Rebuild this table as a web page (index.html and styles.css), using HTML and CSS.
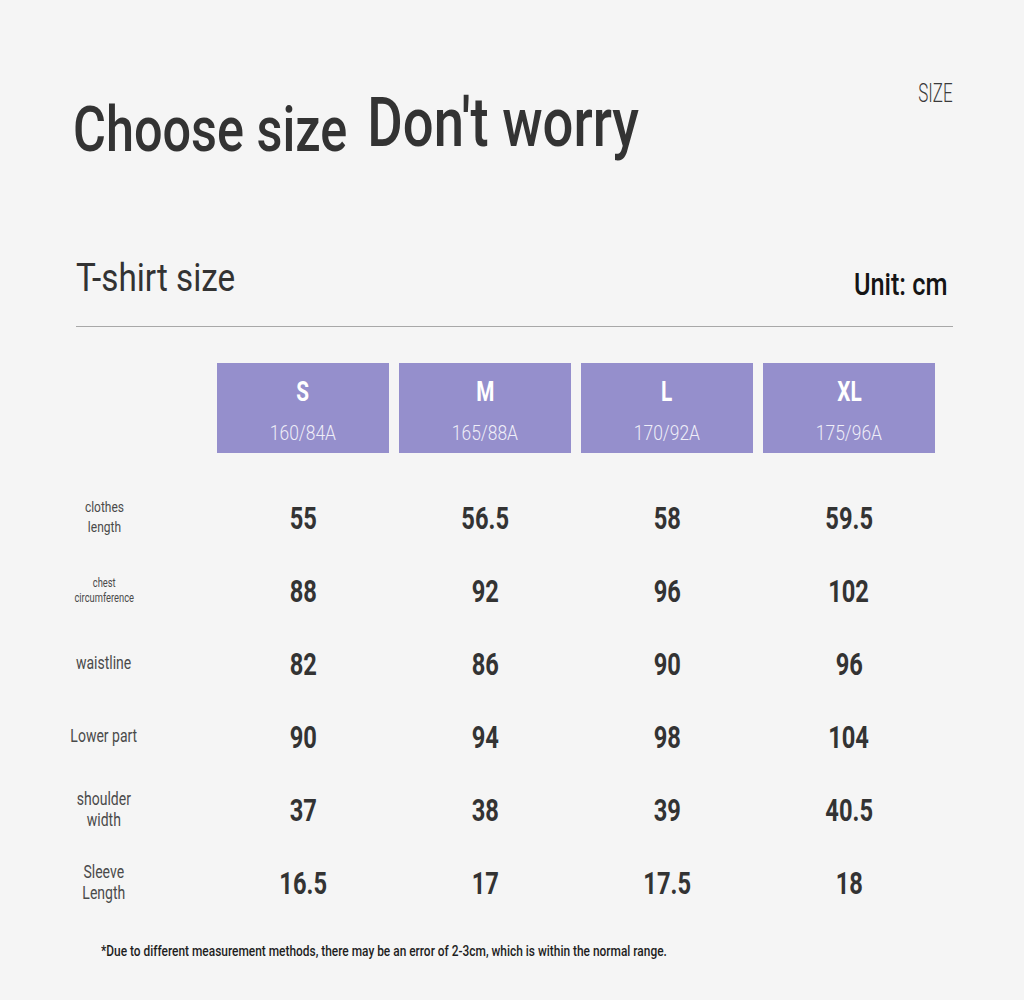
FILE: index.html
```html
<!DOCTYPE html>
<html lang="en">
<head>
<meta charset="utf-8">
<title>T-shirt size chart</title>
<link rel="stylesheet" href="styles.css">
</head>
<body>
<main class="page">
  <header class="hero">
    <h1 class="hero-title"><span class="hero-a">Choose size</span><span class="hero-b">Don't worry</span></h1>
    <div class="hero-tag">SIZE</div>
  </header>

  <section class="chart">
    <div class="chart-head">
      <h2 class="chart-title">T-shirt size</h2>
      <div class="chart-unit">Unit: cm</div>
    </div>

    <div class="grid">
      <div class="label"></div>
      <div class="size"><span class="size-name">S</span><span class="size-sub">160/84A</span></div>
      <div class="size"><span class="size-name">M</span><span class="size-sub">165/88A</span></div>
      <div class="size"><span class="size-name">L</span><span class="size-sub">170/92A</span></div>
      <div class="size"><span class="size-name">XL</span><span class="size-sub">175/96A</span></div>

      <div class="label"><span class="label-text lt-sm">clothes<br>length</span></div>
      <div class="val"><span class="num">55</span></div><div class="val"><span class="num">56.5</span></div><div class="val"><span class="num">58</span></div><div class="val"><span class="num">59.5</span></div>

      <div class="label"><span class="label-text lt-xs">chest<br>circumference</span></div>
      <div class="val"><span class="num">88</span></div><div class="val"><span class="num">92</span></div><div class="val"><span class="num">96</span></div><div class="val"><span class="num">102</span></div>

      <div class="label"><span class="label-text">waistline</span></div>
      <div class="val"><span class="num">82</span></div><div class="val"><span class="num">86</span></div><div class="val"><span class="num">90</span></div><div class="val"><span class="num">96</span></div>

      <div class="label"><span class="label-text">Lower part</span></div>
      <div class="val"><span class="num">90</span></div><div class="val"><span class="num">94</span></div><div class="val"><span class="num">98</span></div><div class="val"><span class="num">104</span></div>

      <div class="label"><span class="label-text">shoulder<br>width</span></div>
      <div class="val"><span class="num">37</span></div><div class="val"><span class="num">38</span></div><div class="val"><span class="num">39</span></div><div class="val"><span class="num">40.5</span></div>

      <div class="label"><span class="label-text">Sleeve<br>Length</span></div>
      <div class="val"><span class="num">16.5</span></div><div class="val"><span class="num">17</span></div><div class="val"><span class="num">17.5</span></div><div class="val"><span class="num">18</span></div>
    </div>

    <p class="note"><span class="note-text">*Due to different measurement methods, there may be an error of 2-3cm, which is within the normal range.</span></p>
  </section>
</main>
</body>
</html>
```

FILE: styles.css
```css
html, body {
  margin: 0;
  padding: 0;
  background: #f5f5f5;
}

body {
  font-family: Roboto, "Liberation Sans", sans-serif;
  color: #333;
}

.page {
  width: 1024px;
  height: 1000px;
  box-sizing: border-box;
  padding: 81px 71px 0 72px;
}

/* ---------- hero ---------- */
.hero {
  display: flex;
  justify-content: space-between;
  align-items: flex-start;
}

.hero-title {
  margin: 6.6px 0 0 1px;
  display: flex;
  align-items: flex-start;
  white-space: nowrap;
  font-weight: 500;
  color: #333;
  transform: scaleX(0.8);
  transform-origin: left top;
}

.hero-a {
  margin-top: 10px;
  font-size: 63px;
  line-height: 1;
}

.hero-b {
  margin-left: 25px;
  font-size: 68px;
  line-height: 1;
  margin-top: 1px;
}

.hero-tag {
  font-size: 25px;
  line-height: 1;
  font-weight: 300;
  color: #3a3a3a;
  transform: scaleX(0.68);
  transform-origin: right top;
}

/* ---------- chart heading ---------- */
.chart {
  margin-top: 98px;
}

.chart-head {
  display: flex;
  justify-content: space-between;
  align-items: flex-start;
  margin-left: 4px;
  padding-bottom: 26px;
  border-bottom: 1px solid #a8a8a8;
}

.chart-title {
  margin: 0;
  font-size: 39px;
  line-height: 1;
  font-weight: 400;
  color: #333;
  white-space: nowrap;
  transform: scaleX(0.853);
  transform-origin: left top;
}

.chart-unit {
  margin: 9px 5px 0 0;
  font-size: 32px;
  line-height: 1;
  font-weight: 500;
  color: #151515;
  white-space: nowrap;
  transform: scaleX(0.79);
  transform-origin: right top;
}

/* ---------- grid ---------- */
.grid {
  margin-top: 36px;
  display: grid;
  grid-template-columns: 135px repeat(4, 172px);
  grid-template-rows: 118.5px;
  grid-auto-rows: 73px;
  column-gap: 10px;
}

.size {
  align-self: start;
  height: 90px;
  box-sizing: border-box;
  padding-top: 15px;
  background: #958fcc;
  display: flex;
  flex-direction: column;
  align-items: center;
}

.size-name {
  font-size: 28px;
  line-height: 1;
  font-weight: 700;
  color: #fff;
  transform: scaleX(0.74);
}

.size-sub {
  margin-top: 17px;
  font-size: 20.5px;
  line-height: 1;
  font-weight: 300;
  color: #efeef8;
  transform: scaleX(0.85);
}

.label {
  padding-right: 71px;
  display: flex;
  align-items: center;
  justify-content: center;
}

.label-text {
  display: block;
  text-align: center;
  font-size: 17.5px;
  line-height: 21px;
  color: #4a4a4a;
  white-space: nowrap;
  transform: scaleX(0.8);
}

.label-text.lt-sm {
  font-size: 15px;
  line-height: 19.4px;
  transform: scaleX(0.8);
}

.label-text.lt-xs {
  font-size: 12.3px;
  line-height: 15px;
  transform: scaleX(0.76);
}

.val {
  display: flex;
  align-items: center;
  justify-content: center;
}

.num {
  display: block;
  font-size: 32px;
  line-height: 1;
  font-weight: 700;
  color: #333;
  transform: scaleX(0.74);
}

/* ---------- footnote ---------- */
.note {
  margin: 21.5px 0 0 29px;
  font-size: 15px;
  line-height: 20px;
  font-weight: 500;
  color: #1e1e1e;
  white-space: nowrap;
}

.note-text {
  display: inline-block;
  transform: scaleX(0.794);
  transform-origin: left center;
}
```
